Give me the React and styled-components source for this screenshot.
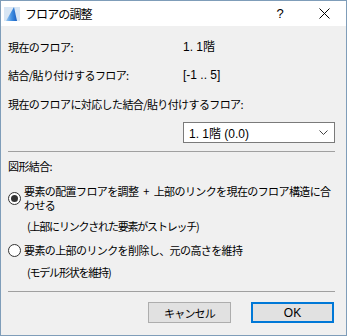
import React from 'react';
import styled, { createGlobalStyle } from 'styled-components';

const Global = createGlobalStyle`
  html, body { margin: 0; padding: 0; background: #f0f0f0; }
  * { box-sizing: border-box; }
`;

const font = `"Noto Sans CJK JP", "Noto Sans", sans-serif`;
const latin = `"Liberation Sans", "Noto Sans CJK JP", sans-serif`;

const Window = styled.div`
  width: 347px;
  height: 336px;
  border: 1px solid #7f9db9;
  background: #f0f0f0;
  font-family: ${font};
  font-size: 11px;
  letter-spacing: -0.6px;
  color: #000;
  display: flex;
  flex-direction: column;
`;

const TitleBar = styled.div`
  height: 25px;
  background: #fff;
  display: flex;
  align-items: center;
  padding-left: 3px;
`;

const TitleText = styled.span`
  font-size: 12px;
  letter-spacing: -0.9px;
  margin-left: 5px;
  flex: 1;
`;

const TitleButton = styled.span`
  width: 44px;
  display: flex;
  justify-content: center;
  align-items: center;
  font-family: "Liberation Sans", sans-serif;
  font-size: 13px;
  letter-spacing: 0;
`;

const Body = styled.div`
  flex: 1;
  padding: 14px 11px 0 7px;
  display: flex;
  flex-direction: column;
`;

const Row = styled.div`
  display: flex;
  line-height: 14px;
  margin-bottom: ${p => p.mb || 0}px;
`;

const Label = styled.div`
  width: 175px;
`;

const Value = styled.span`
  font-family: ${latin};
  font-size: 12px;
  letter-spacing: 0;
`;

const Text = styled.div`
  line-height: 14px;
  margin-top: ${p => p.mt || 0}px;
  padding-left: ${p => p.indent || 0}px;
  letter-spacing: ${p => (p.tight ? -1.2 : -0.6)}px;
`;

const Select = styled.div`
  align-self: flex-end;
  width: 152px;
  height: 21px;
  margin-top: 11px;
  background: #fff;
  border: 1px solid #7a7a7a;
  display: flex;
  align-items: center;
  justify-content: space-between;
  padding: 0 6px 0 5px;
`;

const Divider = styled.div`
  height: 1px;
  background: #a0a0a0;
  margin-top: ${p => p.mt}px;
`;

const RadioRow = styled.div`
  display: flex;
  align-items: center;
  margin-top: ${p => p.mt}px;
  line-height: 14px;
`;

const RadioCircle = styled.span`
  width: 13px;
  height: 13px;
  border-radius: 50%;
  border: 1px solid #333;
  background: #fff;
  flex-shrink: 0;
  margin-right: 3px;
  display: flex;
  align-items: center;
  justify-content: center;
  &::after {
    content: '';
    width: 7px;
    height: 7px;
    border-radius: 50%;
    background: ${p => (p.checked ? '#333' : 'transparent')};
  }
`;

const Buttons = styled.div`
  display: flex;
  justify-content: flex-end;
  gap: 20px;
  margin-top: 10px;
  padding-right: 1px;
`;

const Button = styled.div`
  width: 83px;
  height: 21px;
  background: #e1e1e1;
  border: ${p => (p.primary ? '2px solid #0078d7' : '1px solid #adadad')};
  display: flex;
  align-items: center;
  justify-content: center;
  font-family: ${p => (p.primary ? latin : font)};
  font-size: ${p => (p.primary ? 12 : 11)}px;
  letter-spacing: ${p => (p.primary ? 0 : -0.8)}px;
`;

const AppIcon = () => (
  <svg width="16" height="16" viewBox="0 0 16 16">
    <defs>
      <linearGradient id="g" x1="0" x2="1" y1="0" y2="0">
        <stop offset="0" stopColor="#9cc8f0" />
        <stop offset="0.55" stopColor="#3b8be0" />
        <stop offset="1" stopColor="#1a5fc0" />
      </linearGradient>
    </defs>
    <rect x="0" y="1" width="16" height="14" fill="#d8e6f4" />
    <path d="M2 15 L10 1 L13 15 Z" fill="url(#g)" />
  </svg>
);

const Chevron = () => (
  <svg width="9" height="6" viewBox="0 0 9 6">
    <path d="M0.5 0.5 L4.5 4.5 L8.5 0.5" fill="none" stroke="#444" strokeWidth="1" />
  </svg>
);

const CloseIcon = () => (
  <svg width="11" height="11" viewBox="0 0 11 11">
    <path d="M0.5 0.5 L10.5 10.5 M10.5 0.5 L0.5 10.5" stroke="#000" strokeWidth="1" />
  </svg>
);

export default function App() {
  return (
    <>
      <Global />
      <Window>
        <TitleBar>
          <AppIcon />
          <TitleText>フロアの調整</TitleText>
          <TitleButton>?</TitleButton>
          <TitleButton><CloseIcon /></TitleButton>
        </TitleBar>
        <Body>
          <Row mb={14}>
            <Label>現在のフロア:</Label>
            <Value>1. 1階</Value>
          </Row>
          <Row mb={15}>
            <Label>結合/貼り付けするフロア:</Label>
            <Value>[-1 .. 5]</Value>
          </Row>
          <Text>現在のフロアに対応した結合/貼り付けするフロア:</Text>
          <Select>
            <Value>1. 1階 (0.0)</Value>
            <Chevron />
          </Select>
          <Divider mt={8} />
          <Text mt={7}>図形結合:</Text>
          <RadioRow mt={11}>
            <RadioCircle checked />
            <div>{'要素の配置フロアを調整\u2002+\u2002上部のリンクを現在のフロア構造に合わせる'}</div>
          </RadioRow>
          <Text mt={7} indent={19} tight>(上部にリンクされた要素がストレッチ)</Text>
          <RadioRow mt={10}>
            <RadioCircle />
            <div>要素の上部のリンクを削除し、元の高さを維持</div>
          </RadioRow>
          <Text mt={8} indent={19} tight>(モデル形状を維持)</Text>
          <Divider mt={12} />
          <Buttons>
            <Button>キャンセル</Button>
            <Button primary>OK</Button>
          </Buttons>
        </Body>
      </Window>
    </>
  );
}
